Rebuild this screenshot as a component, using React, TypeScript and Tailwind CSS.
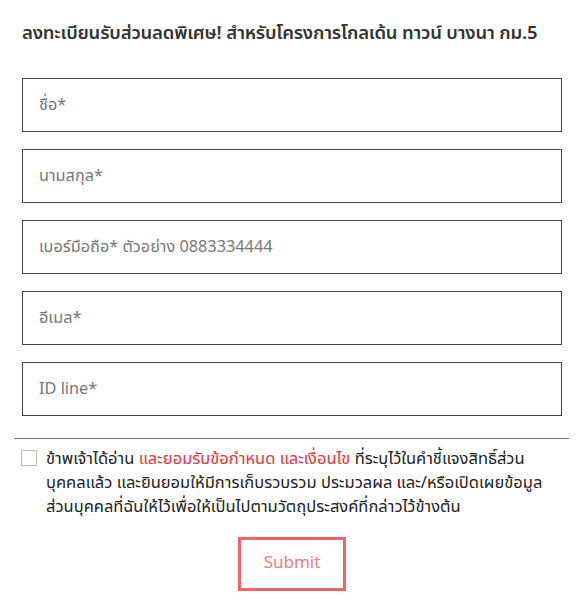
import React from "react";

const fields = [
  "ชื่อ*",
  "นามสกุล*",
  "เบอร์มือถือ* ตัวอย่าง 0883334444",
  "อีเมล*",
  "ID line*",
];

export default function App() {
  return (
    <div
      className="w-[584px] h-[610px] bg-white overflow-hidden"
      style={{ fontFamily: '"Noto Sans Thai", "Noto Sans", "Liberation Sans", sans-serif' }}
    >
      <div className="pt-[21px] px-[22px]">
        <h1 className="text-[18.5px] leading-[24px] font-semibold text-[#333] tracking-[-0.2px] whitespace-nowrap">
          ลงทะเบียนรับส่วนลดพิเศษ! สำหรับโครงการโกลเด้น ทาวน์ บางนา กม.5
        </h1>
      </div>
      <div className="mt-[33px] px-[22px] flex flex-col gap-[17px] w-[562px]">
        {fields.map((f) => (
          <input
            key={f}
            placeholder={f}
            className="h-[54px] w-[540px] border border-[#444] px-[16px] text-[16.3px] text-[#333] placeholder:text-[#777] outline-none"
          />
        ))}
      </div>
      <div className="mt-[22px] ml-[14px] w-[555px] h-px bg-[#777]" />
      <div className="mt-[9px] pl-[21px] pr-[10px] flex gap-[9px]">
        <div className="mt-[2px] w-[16px] h-[16px] shrink-0 border border-[#bbb]" />
        <p className="text-[16.5px] leading-[24px] text-[#222] -mt-[1px] whitespace-nowrap">
          ข้าพเจ้าได้อ่าน{" "}
          <span className="text-[#e8333c]">และยอมรับข้อกำหนด และเงื่อนไข</span>{" "}
          ที่ระบุไว้ในคำชี้แจงสิทธิ์ส่วน
          <br />
          บุคคลแล้ว และยินยอมให้มีการเก็บรวบรวม ประมวลผล และ/หรือเปิดเผยข้อมูล
          <br />
          ส่วนบุคคลที่ฉันให้ไว้เพื่อให้เป็นไปตามวัตถุประสงค์ที่กล่าวไว้ข้างต้น
        </p>
      </div>
      <div className="mt-[18px] flex justify-center">
        <button className="w-[108px] h-[54px] border-[3px] border-[#f0656d] text-[#f07a80] text-[17px] bg-white">
          Submit
        </button>
      </div>
    </div>
  );
}
